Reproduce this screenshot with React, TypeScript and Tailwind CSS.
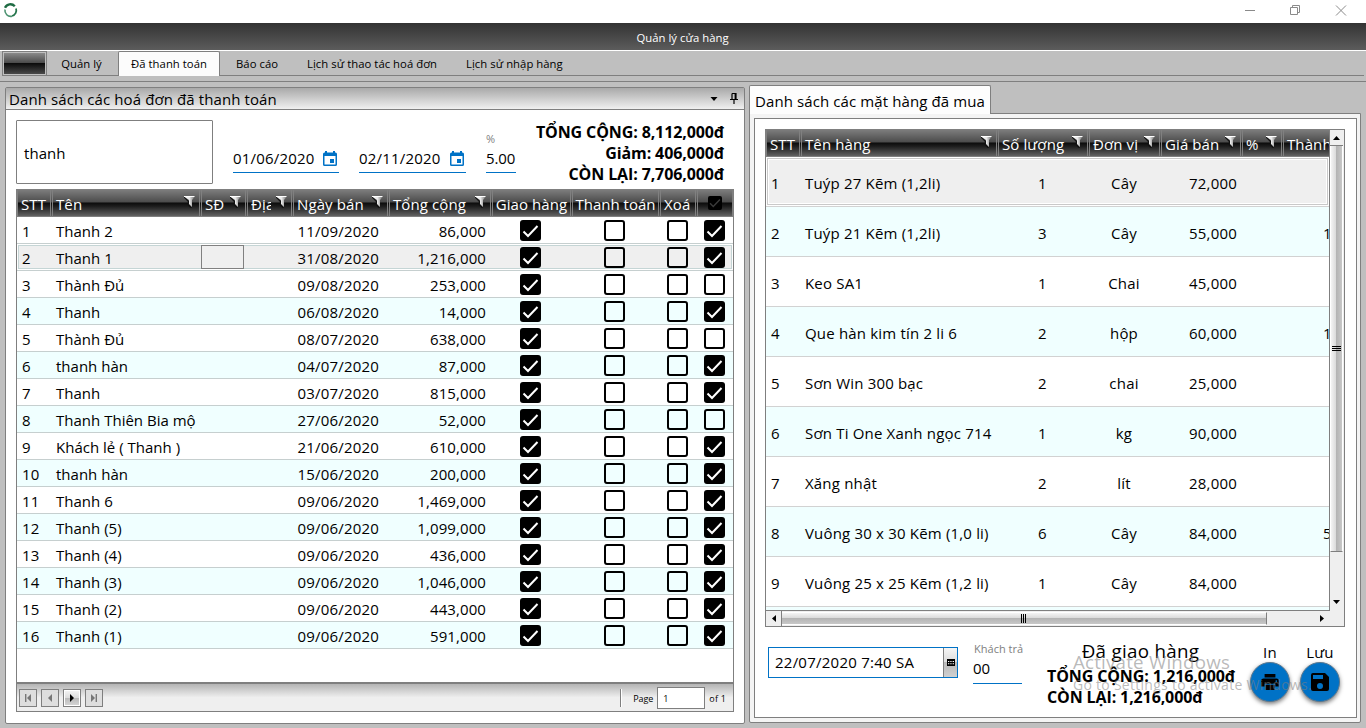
import React from "react";

const HEAD = "bg-[linear-gradient(180deg,#7c7c7c_0%,#4c4c4c_46%,#0c0c0c_50%,#1c1c1c_62%,#626262_100%)]";

function Funnel() {
  return (
    <svg width="12" height="12" viewBox="0 1 12 12" className="mt-[-2px] shrink-0">
      <defs>
        <linearGradient id="funnel" x1="0" y1="0" x2="1" y2="0">
          <stop offset="0" stopColor="#ffffff" />
          <stop offset="0.5" stopColor="#e8e8e8" />
          <stop offset="1" stopColor="#6a6a6a" />
        </linearGradient>
      </defs>
      <path d="M0 2L4.5 6.5V10L7.5 13" fill="none" stroke="#111" strokeWidth="1.2" />
      <path d="M0 1.5H11L8 5V12L5 9V5Z" fill="url(#funnel)" />
      <path d="M0 1.5H10.5" stroke="#fff" strokeWidth="1" />
    </svg>
  );
}

function HeadCell({ w, label, filter, center, children }: { w: string; label?: string; filter?: boolean; center?: boolean; children?: React.ReactNode }) {
  return (
    <div className={`${w} flex h-full shrink-0 items-center overflow-hidden border-x border-[#808080] ${center ? "justify-center" : "justify-between pl-[3px] pr-[3px]"}`}>
      {label && <span className="min-w-0 whitespace-nowrap pt-px tracking-[0.1px] text-white">{label}</span>}
      {filter && <Funnel />}
      {children}
    </div>
  );
}

function Box({ on }: { on?: boolean }) {
  return on ? (
    <span className="flex size-[21px] items-center justify-center rounded-[3px] bg-black">
      <svg width="17" height="14" viewBox="0 0 17 14"><path d="M1.5 7.5L6 12L15.5 2" fill="none" stroke="#fff" strokeWidth="2" /></svg>
    </span>
  ) : (
    <span className="size-[21px] rounded-[3px] border-2 border-black" />
  );
}

function Calendar() {
  return (
    <svg width="14" height="15" viewBox="0 0 14 15">
      <path fillRule="evenodd" d="M2 0h2v1.5h6V0h2v1.5h.5q1.5 0 1.5 1.5v10.5q0 1.5-1.5 1.5h-11Q0 15 0 13.5V3q0-1.5 1.5-1.5H2zM1.5 5v8.5h11V5z" fill="#0072c6" />
      <rect x="7" y="8" width="4" height="4" fill="#0072c6" />
    </svg>
  );
}

type Order = [string, string, string, boolean];
const orders: Order[] = [
  ["Thanh 2", "11/09/2020", "86,000", true],
  ["Thanh 1", "31/08/2020", "1,216,000", true],
  ["Thành Đủ", "09/08/2020", "253,000", false],
  ["Thanh", "06/08/2020", "14,000", true],
  ["Thành Đủ", "08/07/2020", "638,000", false],
  ["thanh hàn", "04/07/2020", "87,000", true],
  ["Thanh", "03/07/2020", "815,000", true],
  ["Thanh Thiên Bia mộ", "27/06/2020", "52,000", false],
  ["Khách lẻ ( Thanh )", "21/06/2020", "610,000", true],
  ["thanh hàn", "15/06/2020", "200,000", true],
  ["Thanh 6", "09/06/2020", "1,469,000", true],
  ["Thanh (5)", "09/06/2020", "1,099,000", true],
  ["Thanh (4)", "09/06/2020", "436,000", true],
  ["Thanh (3)", "09/06/2020", "1,046,000", true],
  ["Thanh (2)", "09/06/2020", "443,000", true],
  ["Thanh (1)", "09/06/2020", "591,000", true],
];

const items: string[][] = [
  ["Tuýp 27 Kẽm (1,2li)", "1", "Cây", "72,000", ""],
  ["Tuýp 21 Kẽm (1,2li)", "3", "Cây", "55,000", "1"],
  ["Keo SA1", "1", "Chai", "45,000", ""],
  ["Que hàn kim tín 2 li 6", "2", "hộp", "60,000", "1"],
  ["Sơn Win 300 bạc", "2", "chai", "25,000", ""],
  ["Sơn Ti One Xanh ngọc 714", "1", "kg", "90,000", ""],
  ["Xăng nhật", "2", "lít", "28,000", ""],
  ["Vuông 30 x 30 Kẽm (1,0 li)", "6", "Cây", "84,000", "5"],
  ["Vuông 25 x 25 Kẽm (1,2 li)", "1", "Cây", "84,000", ""],
];

function OrderRow({ order, i }: { order: Order; i: number }) {
  const selected = i === 1;
  return (
    <div className={`flex h-[27px] shrink-0 items-center border-b border-[#c6cfcf] pt-px ${selected ? "bg-[#efefef] shadow-[inset_0_0_0_1px_#fff,inset_0_0_0_2px_#c5d5d5]" : i % 2 ? "bg-[#f0ffff]" : "bg-white"}`}>
      <span className="w-[35px] pl-[5px]">{i + 1}</span>
      <span className="w-[149px] whitespace-nowrap pl-[4px] tracking-[0.01px]">{order[0]}</span>
      <span className={`-mt-px h-[24px] w-[43px] ${selected ? "border border-[#808080]" : ""}`} />
      <span className="w-[144px] pr-[9px] text-right">{order[1]}</span>
      <span className="w-[103px] pr-[5px] text-right tracking-[0.1px]">{order[2]}</span>
      <span className="flex w-[80px] justify-center pr-[2px]"><Box on /></span>
      <span className="flex w-[88px] justify-center pr-[2px]"><Box /></span>
      <span className="flex w-[37px] justify-center"><Box /></span>
      <span className="flex w-[36px] justify-center"><Box on={order[3]} /></span>
    </div>
  );
}

function PageButton({ d, active }: { d: string; active?: boolean }) {
  return (
    <span className={`flex size-[18px] items-center justify-center border border-[#7f7f7f] ${active ? "bg-[linear-gradient(180deg,#f6f6f6_0%,#dcdcdc_49%,#b9b9b9_50%,#d6d6d6_100%)] shadow-[inset_0_0_0_1px_#fff]" : "bg-[#dedede]"}`}>
      <svg width="8" height="8" viewBox="0 0 8 8"><path d={d} fill={active ? "#000" : "#777"} /></svg>
    </span>
  );
}

function PaidOrders() {
  return (
    <section className="flex h-[637px] w-[740px] shrink-0 flex-col rounded-[2px] border border-[#7f7f7f] bg-white">
      <header className="flex h-[22px] shrink-0 items-center border-b border-[#7f7f7f] bg-[linear-gradient(180deg,#a9a9a9,#f0f0f0)] pl-[3px] pr-[6px]">
        <span className="grow tracking-[0.1px]">Danh sách các hoá đơn đã thanh toán</span>
        <svg width="8" height="4" viewBox="0 0 8 4" className="mr-[12px]"><path d="M.5 0H7.5L4 4Z" fill="#000" /></svg>
        <svg width="8" height="11" viewBox="0 0 8 11"><path d="M2 .5H6V6M2 .5V6M5.2 .5V6M0 6.5H8M4 6.5V11" fill="none" stroke="#000" strokeWidth="1.2" /></svg>
      </header>
      <div className="flex h-[79px] shrink-0 items-start pl-[10px] pr-[20px] pt-[10px]">
        <div className="flex h-[64px] w-[197px] items-center rounded-[1px] border border-[#7f7f7f] pl-[7px] pt-[2px] tracking-[0.05px]">thanh</div>
        <div className="ml-[20px] mt-[25px] flex h-[28px] w-[106px] items-center justify-between border-b border-[#0072c6] pb-px pr-[2px]">
          <span>01/06/2020</span><Calendar />
        </div>
        <div className="ml-[20px] mt-[25px] flex h-[28px] w-[107px] items-center justify-between border-b border-[#0072c6] pb-px pr-[2px]">
          <span>02/11/2020</span><Calendar />
        </div>
        <div className="ml-[20px] mt-[11px] flex h-[42px] w-[30px] flex-col border-b border-[#0072c6]">
          <span className="text-[11px] leading-[16px] text-[#808080]">%</span>
          <span className="leading-[22px] tracking-[-0.1px]">5.00</span>
        </div>
        <div className="grow pt-[2px] text-right text-[16px] font-bold leading-[21px] tracking-[-0.12px]">
          <p>TỔNG CỘNG: 8,112,000đ</p>
          <p>Giảm: 406,000đ</p>
          <p>CÒN LẠI: 7,706,000đ</p>
        </div>
      </div>
      <div className="ml-[10px] flex h-[523px] w-[718px] flex-col border border-[#7f7f7f]">
        <div className={`flex h-[27px] shrink-0 gap-px border-b border-[#7f7f7f] ${HEAD}`}>
          <HeadCell w="w-[34px]" label="STT" />
          <HeadCell w="w-[148px]" label="Tên" filter />
          <HeadCell w="w-[45px]" label="SĐ" filter />
          <div className="flex h-full w-[45px] shrink-0 items-center justify-between border-x border-[#808080] px-[3px]">
            <span className="w-[20px] overflow-hidden whitespace-nowrap pt-px text-white">Địa</span>
            <Funnel />
          </div>
          <HeadCell w="w-[95px]" label="Ngày bán" filter />
          <HeadCell w="w-[102px]" label="Tổng cộng" filter />
          <div className="flex h-full w-[79px] shrink-0 items-center justify-center border-x border-[#808080] pt-px">
            <span className="whitespace-nowrap tracking-[0.06px] text-white">Giao hàng</span>
          </div>
          <div className="flex h-full w-[87px] shrink-0 items-center justify-center border-x border-[#808080] pt-px">
            <span className="whitespace-nowrap tracking-[0px] text-white">Thanh toán</span>
          </div>
          <HeadCell w="w-[36px]" label="Xoá" />
          <HeadCell w="w-[36px]" center>
            <span className="flex size-[14px] items-center justify-center rounded-[2px] bg-black">
              <svg width="12" height="10" viewBox="0 0 17 14"><path d="M1.5 7.5L6 12L15.5 2" fill="none" stroke="#3a3a3a" strokeWidth="2" /></svg>
            </span>
          </HeadCell>
        </div>
        <div className="grow">
          {orders.map((o, i) => <OrderRow key={i} order={o} i={i} />)}
        </div>
        <footer className="flex h-[29px] shrink-0 items-center border-t-2 border-[#7f7f7f] bg-[linear-gradient(180deg,#b4b4b4_0%,#efefef_50%)] pl-[2px] pr-[7px] text-[9px]">
          <div className="flex grow gap-[4px]">
            <PageButton d="M1 0H2.4V8H1ZM7 0V8L3 4Z" />
            <PageButton d="M6 0V8L2 4Z" />
            <PageButton d="M2 0V8L6 4Z" active />
            <PageButton d="M5.6 0H7V8H5.6ZM1 0V8L5 4Z" />
          </div>
          <span className="h-[18px] w-[2px] border-l border-[#7f7f7f] bg-white" />
          <span className="ml-[11px] w-[24px] pt-[2px] tracking-[-0.1px]">Page</span>
          <span className="flex h-[22px] w-[48px] items-center border border-[#7f7f7f] bg-white pl-[5px] pt-[2px]">1</span>
          <span className="ml-[4px] pt-[2px]">of 1</span>
        </footer>
      </div>
    </section>
  );
}

function PurchasedGrid() {
  return (
    <div className="flex h-[498px] w-[580px] flex-col border border-[#7f7f7f]">
      <div className="flex h-[481px] shrink-0">
        <div className="flex h-full w-[563px] flex-col overflow-hidden border-b border-[#7f7f7f]">
          <div className={`flex h-[27px] w-[650px] shrink-0 gap-px border-b border-[#7f7f7f] ${HEAD}`}>
            <HeadCell w="w-[34px]" label="STT" />
            <HeadCell w="w-[196px]" label="Tên hàng" filter />
            <HeadCell w="w-[90px]" label="Số lượng" filter />
            <HeadCell w="w-[71px]" label="Đơn vị" filter />
            <HeadCell w="w-[80px]" label="Giá bán" filter />
            <HeadCell w="w-[40px]" label="%" filter />
            <HeadCell w="w-[120px]" label="Thành tiền" filter />
          </div>
          {items.map((r, i) => (
            <div key={i} className={`flex h-[50px] w-[563px] shrink-0 items-center border-b border-[#d2d2d2] pt-[3px] ${i === 0 ? "bg-[#efefef] shadow-[inset_0_0_0_1px_#fff,inset_0_0_0_2px_#c9c9c9,inset_0_0_0_3px_#fff]" : i % 2 ? "bg-[#f0ffff]" : "bg-white"}`}>
              <span className="w-[34px] pl-[5px]">{i + 1}</span>
              <span className="w-[197px] whitespace-nowrap pl-[5px] tracking-[0.18px]">{r[0]}</span>
              <span className="w-[91px] text-center">{r[1]}</span>
              <span className="w-[72px] text-center">{r[2]}</span>
              <span className="w-[80px] pr-[3px] text-right">{r[3]}</span>
              <span className="w-[89px] whitespace-nowrap pl-[83px] text-black">{r[4]}</span>
            </div>
          ))}
          <div className="h-[50px] shrink-0 bg-[#f0ffff]" />
        </div>
        <div className="flex h-full w-[15px] flex-col items-center border-l border-[#7f7f7f] bg-[#efefef] pr-px">
          <span className="flex h-[16px] w-full items-center justify-center border-b border-[#7f7f7f]">
            <svg width="7" height="4" viewBox="0 0 7 4"><path d="M0 4H7L3.5 0Z" fill="#000" /></svg>
          </span>
          <span className="flex h-[406px] w-full flex-col items-center justify-center gap-px border-x border-b border-b-[#7f7f7f] border-x-white bg-[linear-gradient(90deg,#f4f4f4_0%,#dadada_45%,#b4b4b4_50%,#c8c8c8_100%)]">
            <span className="h-px w-[9px] bg-black" /><span className="h-px w-[9px] bg-black" /><span className="h-px w-[9px] bg-black" />
          </span>
          <svg width="7" height="4" viewBox="0 0 7 4" className="mt-[48px]"><path d="M0 0H7L3.5 4Z" fill="#000" /></svg>
        </div>
      </div>
      <div className="flex h-[15px] items-center bg-[#efefef]">
        <span className="flex h-full w-[16px] items-center justify-center border-r border-[#7f7f7f]">
          <svg width="4" height="7" viewBox="0 0 4 7"><path d="M4 0V7L0 3.5Z" fill="#000" /></svg>
        </span>
        <span className="flex h-[13px] w-[485px] items-center justify-center gap-px border-r border-y border-y-white border-r-[#7f7f7f] bg-[linear-gradient(180deg,#f4f4f4_0%,#dadada_45%,#b4b4b4_50%,#c8c8c8_100%)] pr-px">
          <span className="h-[9px] w-px bg-black" /><span className="h-[9px] w-px bg-black" /><span className="h-[9px] w-px bg-black" />
        </span>
        <svg width="4" height="7" viewBox="0 0 4 7" className="ml-[53px]"><path d="M0 0V7L4 3.5Z" fill="#000" /></svg>
      </div>
    </div>
  );
}

function RoundButton({ label, children }: { label: string; children: React.ReactNode }) {
  return (
    <div className="flex w-[50px] flex-col items-center">
      <span className="h-[20px] leading-[20px]">{label}</span>
      <span className="flex size-[40px] items-center justify-center rounded-full border border-[#5a7890] bg-[#0072c6] shadow-[0_2px_4px_rgba(0,0,0,0.5)]">{children}</span>
    </div>
  );
}

function PurchasedItems() {
  return (
    <section className="flex w-[612px] flex-col">
      <div className="z-10 mb-[-1px] flex h-[29px] w-[242px] items-center rounded-t-[2px] border border-b-0 border-[#7f7f7f] bg-[#fdfdfd] pl-[5px] pt-[2px]">
        <span className="whitespace-nowrap tracking-[0.1px]">Danh sách các mặt hàng đã mua</span>
      </div>
      <div className="h-[610px] rounded-b-[2px] border border-[#7f7f7f] bg-[#f4f4f4] p-[3px] pl-[4px] pt-[4px]">
        <div className="h-[600px] border border-[#7f7f7f] bg-white pl-[10px] pt-[10px]">
          <PurchasedGrid />
          <div className="flex pl-[3px]">
            <div className="mt-[20px] flex h-[31px] w-[190px] items-center border border-[#0072c6] pl-[6px]">
              <span className="grow pb-[2px] tracking-[0.24px]">22/07/2020 7:40 SA</span>
              <span className="flex h-full w-[14px] items-center justify-center border-l border-[#7f7f7f] bg-[linear-gradient(180deg,#f6f6f6_0%,#dcdcdc_49%,#b9b9b9_50%,#d0d0d0_100%)]">
                <svg width="8" height="7" viewBox="0 0 8 7"><path d="M0 0H8V7H0Z" fill="#000" /><path d="M1 2h1.3v1H1zM3.3 2h1.3v1H3.3zM5.6 2H7v1H5.6zM1 4.3h1.3v1H1zM3.3 4.3h1.3v1H3.3zM5.6 4.3H7v1H5.6z" fill="#fff" /></svg>
              </span>
            </div>
            <div className="ml-[15px] mt-[13px] flex h-[44px] w-[49px] flex-col border-b border-[#0072c6]">
              <span className="whitespace-nowrap pl-px text-[11px] leading-[18px] tracking-[0.02px] text-[#808080]">Khách trả</span>
              <span className="-mt-px leading-[22px] tracking-[-0.1px]">00</span>
            </div>
            <div className="ml-[25px] mt-[10px] flex w-[198px] flex-col">
              <p className="w-[187px] whitespace-nowrap text-center text-[18.75px] leading-[27px] tracking-[0.3px]">Đã giao hàng</p>
              <p className="mt-[2px] whitespace-nowrap text-[16px] font-bold leading-[21px] tracking-[-0.12px]">TỔNG CỘNG: 1,216,000đ</p>
              <p className="whitespace-nowrap text-[16px] font-bold leading-[21px] tracking-[-0.12px]">CÒN LẠI: 1,216,000đ</p>
            </div>
            <div className="mt-[15px] flex">
              <RoundButton label="In">
                <svg width="18" height="18" viewBox="0 0 20 18"><path d="M4 0H16V4H4ZM3 5H17Q20 5 20 8V14H16V11H4V14H0V8Q0 5 3 5ZM5 12H15V18H5Z" fill="#000" /><circle cx="17" cy="8" r="1" fill="#0072c6" /></svg>
              </RoundButton>
              <RoundButton label="Lưu">
                <svg width="18" height="18" viewBox="3 3 18 18"><path d="M17 3H5a2 2 0 0 0-2 2v14a2 2 0 0 0 2 2h14a2 2 0 0 0 2-2V7zm-5 16a3 3 0 1 1 0-6 3 3 0 0 1 0 6zm3-10H5V5h10z" fill="#000" /></svg>
              </RoundButton>
            </div>
          </div>
        </div>
      </div>
    </section>
  );
}

export default function App() {
  return (
    <div className="relative flex h-[728px] w-[1366px] flex-col overflow-hidden bg-[#bfbfbf] font-['Open_Sans','Noto_Sans',sans-serif] text-[15px] leading-[20px] tracking-[0.2px] text-black">
      <div className="flex h-[23px] shrink-0 items-center bg-white pl-[3px] pr-[19px]">
        <svg width="15" height="15" viewBox="0 0 15 15" className="mt-[-3px]">
          <path d="M2 4.8A6 6 0 0 1 11.8 3.2" fill="none" stroke="#1e6b43" strokeWidth="2.4" />
          <path d="M13 5.5A5.8 5.8 0 0 1 9 13" fill="none" stroke="#25754c" strokeWidth="1.8" />
          <path d="M9 13.2A5.8 5.8 0 0 1 2 6.5" fill="none" stroke="#4b9270" strokeWidth="1.6" />
        </svg>
        <span className="grow" />
        <svg width="102" height="11" viewBox="0 0 102 11" className="mt-[-3px]">
          <path d="M0 5.5H10M45.5 2.5H52.5V9.5H45.5ZM47.5 2.5V.5H54.5V7.5H52.5M91 .5L101 10.5M101 .5L91 10.5" fill="none" stroke="#8a8a8a" />
        </svg>
      </div>
      <div className="flex h-[27px] shrink-0 items-center justify-center bg-[linear-gradient(180deg,#333,#5c5c5c)] pr-px pt-[3px] text-[11.3px] tracking-[0.03px] text-white">Quản lý cửa hàng</div>
      <nav className="flex h-[32px] shrink-0 border-b border-t border-b-[#7f7f7f] border-t-white pl-[2px] pr-[2px] text-[11.3px] tracking-[0.04px]">
        <div className="h-[25px] w-[45px] border border-[#7f7f7f] p-px">
          <div className="h-full bg-[linear-gradient(180deg,#8a8a8a_0%,#4c4c4c_46%,#0c0c0c_50%,#4a4a4a_100%)]" />
        </div>
        <span className="flex h-[25px] w-[71px] items-center justify-center border-b border-[#7f7f7f] pr-[2px] pt-[2px]">Quản lý</span>
        <span className="flex h-[25px] w-[102px] items-center justify-center rounded-t-[2px] border border-b-0 border-[#7f7f7f] bg-[#fcfcfc]">Đã thanh toán</span>
        <span className="flex h-[25px] grow items-center border-b border-[#7f7f7f] pl-[16px] pt-[2px]">
          <span className="w-[71px]">Báo cáo</span>
          <span className="w-[159px]">Lịch sử thao tác hoá đơn</span>
          <span>Lịch sử nhập hàng</span>
        </span>
      </nav>
      <main className="flex pl-[5px]">
        <div className="pt-[5px]"><PaidOrders /></div>
        <div className="ml-[4px] flex pt-[3px]"><PurchasedItems /></div>
      </main>
      <div className="pointer-events-none absolute left-[1073px] top-[650px] z-20 whitespace-nowrap text-[#808080]/55">
        <p className="text-[18.75px] leading-[24px]">Activate Windows</p>
        <p className="pt-px text-[14px] leading-[19px] tracking-[0.27px]">Go to Settings to activate Windows.</p>
      </div>
    </div>
  );
}
